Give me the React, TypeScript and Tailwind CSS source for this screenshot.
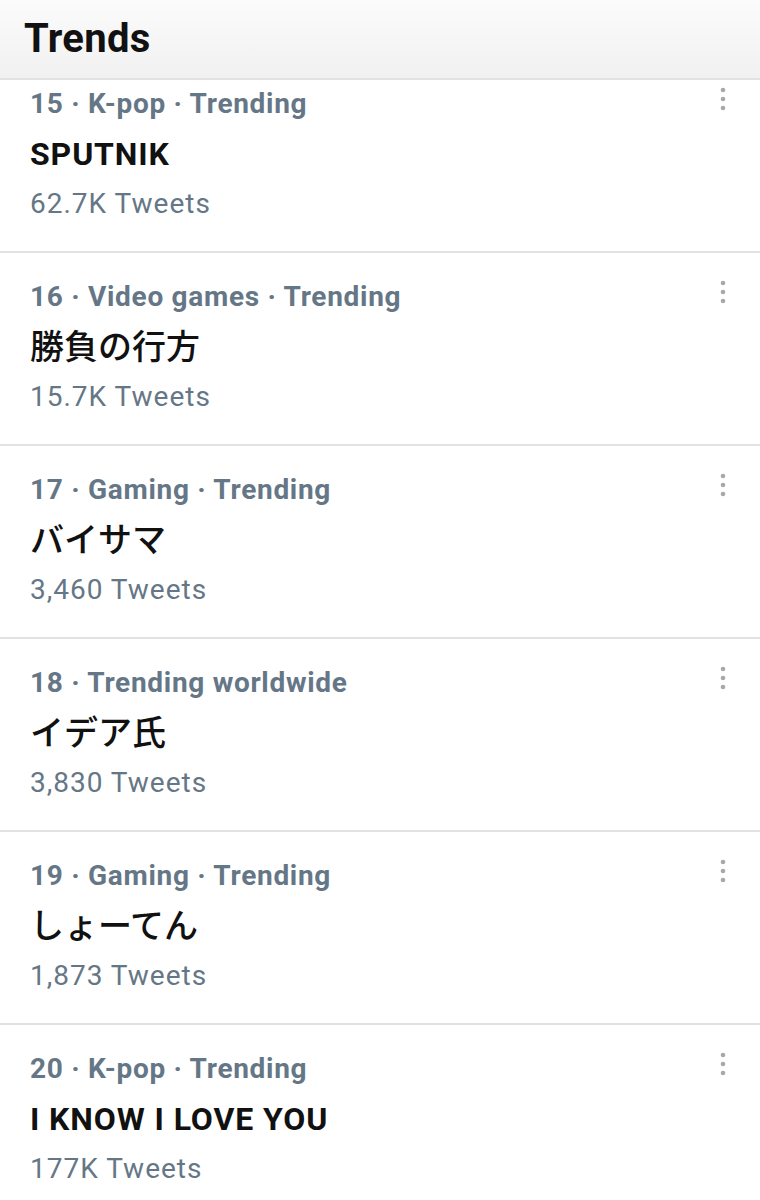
import React from "react"

const trends = [
  { rank: 15, context: "K-pop · Trending", name: "SPUTNIK", count: "62.7K Tweets", cjk: false },
  { rank: 16, context: "Video games · Trending", name: "勝負の行方", count: "15.7K Tweets", cjk: true },
  { rank: 17, context: "Gaming · Trending", name: "バイサマ", count: "3,460 Tweets", cjk: true },
  { rank: 18, context: "Trending worldwide", name: "イデア氏", count: "3,830 Tweets", cjk: true },
  { rank: 19, context: "Gaming · Trending", name: "しょーてん", count: "1,873 Tweets", cjk: true },
  { rank: 20, context: "K-pop · Trending", name: "I KNOW I LOVE YOU", count: "177K Tweets", cjk: false },
]

function MoreIcon() {
  return (
    <svg width="8" height="26" viewBox="0 0 8 26" className="text-[#a8a8a8]">
      <circle cx="4" cy="4" r="2.3" fill="currentColor" />
      <circle cx="4" cy="13" r="2.3" fill="currentColor" />
      <circle cx="4" cy="22" r="2.3" fill="currentColor" />
    </svg>
  )
}

export default function App() {
  return (
    <div className="h-[1200px] w-[760px] overflow-hidden bg-white font-['Roboto','Noto_Sans_CJK_JP',sans-serif]">
      <header className="flex h-[80px] items-center border-b-2 border-[#e2e2e2] bg-gradient-to-b from-[#fbfbfb] to-[#f1f1f1] px-6">
        <h1 className="text-[40px] font-bold leading-none tracking-[0.3px] text-[#111]">Trends</h1>
      </header>
      <div className="overflow-hidden">
        <ul className="-mt-[20px]">
          {trends.map((t) => (
            <li key={t.rank} className="flex border-b-2 border-[#e2e2e2] pt-[19px] pb-[22px] pl-[30px] pr-[33px]">
              <div className="flex-1">
                <div className="h-[50px] text-[28px] font-bold leading-[50px] tracking-[0.7px] text-[#657786]">
                  {t.rank} · {t.context}
                </div>
                <div
                  className={
                    t.cjk
                      ? "h-[50px] font-['Noto_Sans_CJK_JP',sans-serif] text-[34px] font-medium leading-[46px] text-[#111]"
                      : "h-[50px] text-[32px] font-bold leading-[50px] tracking-[0.9px] text-[#111]"
                  }
                >
                  {t.name}
                </div>
                <div className="h-[50px] text-[28px] leading-[50px] tracking-[1px] text-[#657786]">{t.count}</div>
              </div>
              <div className="pt-[7px]">
                <MoreIcon />
              </div>
            </li>
          ))}
        </ul>
      </div>
    </div>
  )
}
